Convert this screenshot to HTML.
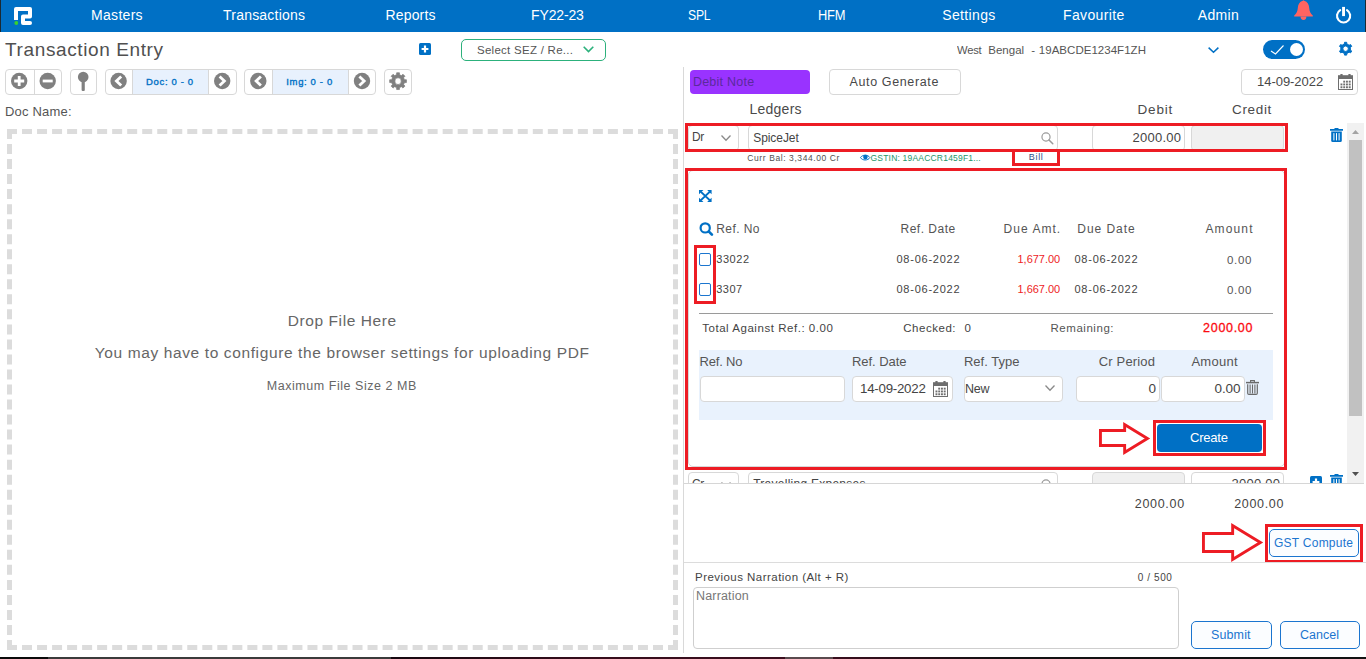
<!DOCTYPE html>
<html lang="en"><head><meta charset="utf-8"><title>Transaction Entry</title>
<style>
*{box-sizing:border-box;margin:0;padding:0}
html,body{width:1366px;height:659px;overflow:hidden;background:#fff}
body{position:relative;font-family:"Liberation Sans",Arial,sans-serif;color:#444}
.t{position:absolute;white-space:nowrap;line-height:20px;height:20px;display:block}
.abs{position:absolute}
nav{position:absolute;left:0;top:0;width:1366px;height:32px;background:#0070c5}
nav .t{color:#fff}
.bx{position:absolute;border:1px solid #d8d8d8;border-radius:4px;background:#fff}
.red{position:absolute;border:3px solid #ed1c24}
.btn{position:absolute;border:1px solid #1b75cf;border-radius:5px;background:#fbfdff}
svg{position:absolute;overflow:visible}
</style></head><body>

<nav>
<div class="abs" style="left:0;top:0;width:1px;height:32px;background:#1a2a33"></div>
<div class="abs" style="left:1365px;top:0;width:1px;height:32px;background:#1a2a33"></div>
<svg style="left:14px;top:7px" width="18" height="18" viewBox="0 0 18 18"><path d="M2 13V2H16V9.5H9V16H16" fill="none" stroke="#fff" stroke-width="4" stroke-linejoin="round" stroke-linecap="butt"/><circle cx="16" cy="16" r="2" fill="#fff"/><circle cx="2.3" cy="16" r="1.9" fill="#3ad12c"/></svg>
<a class="t" style="left:91.1px;top:5.0px;font-size:14px;letter-spacing:0.29px;color:#fff;">Masters</a>
<a class="t" style="left:223.1px;top:5.0px;font-size:14px;letter-spacing:0.20px;color:#fff;">Transactions</a>
<a class="t" style="left:385.5px;top:5.0px;font-size:14px;letter-spacing:0.16px;color:#fff;">Reports</a>
<a class="t" style="left:531.1px;top:5.0px;font-size:14px;letter-spacing:-0.15px;color:#fff;">FY22-23</a>
<a class="t" style="left:687.9px;top:5.0px;font-size:14px;letter-spacing:-0.25px;color:#fff;transform:scaleX(0.8705);transform-origin:0 50%;">SPL</a>
<a class="t" style="left:817.7px;top:5.0px;font-size:14px;letter-spacing:-0.25px;color:#fff;transform:scaleX(0.9188);transform-origin:0 50%;">HFM</a>
<a class="t" style="left:942.2px;top:5.0px;font-size:14px;letter-spacing:0.37px;color:#fff;">Settings</a>
<a class="t" style="left:1063.0px;top:5.0px;font-size:14px;letter-spacing:0.36px;color:#fff;">Favourite</a>
<a class="t" style="left:1197.7px;top:5.0px;font-size:14px;letter-spacing:0.38px;color:#fff;">Admin</a>
<svg style="left:1294px;top:0" width="19" height="21" viewBox="0 0 19 21"><path d="M9.5 -1 C9.5 0.5 9.6 0.6 10.2 0.8 C13.6 1.8 15 4.5 15.2 8 C15.4 11.5 16.5 13.5 18.8 15.6 L18.8 16.6 L0.2 16.6 L0.2 15.6 C2.5 13.5 3.6 11.5 3.8 8 C4 4.5 5.4 1.8 8.8 0.8 C9.4 0.6 9.5 0.5 9.5 -1 Z" fill="#ff6461"/><path d="M6.6 16.5 A2.9 3.4 0 0 0 12.4 16.5 Z" fill="#ff6461"/></svg>
<svg style="left:1335px;top:6px" width="18" height="18" viewBox="0 0 18 18"><path d="M5.2 4.2 A6.6 6.6 0 1 0 12 4.2" fill="none" stroke="#fff" stroke-width="2.1" stroke-linecap="round"/><rect x="7.1" y="0.9" width="2.9" height="9.2" fill="#fff"/></svg>
</nav>
<h1 class="t" style="left:5.1px;top:39.5px;font-size:19px;letter-spacing:0.61px;color:#505050;font-weight:400;">Transaction Entry</h1>
<svg style="left:419px;top:43px" width="12" height="12" viewBox="0 0 12 12"><rect width="12" height="12" rx="1.5" fill="#0070c5"/><path d="M6 2.6V9.4M2.6 6H9.4" stroke="#fff" stroke-width="2.2"/></svg>
<div class="abs" style="left:461px;top:39px;width:145px;height:22px;border:1px solid #2cb17c;border-radius:5px;background:#fff"></div>
<span class="t" style="left:477.0px;top:40.0px;font-size:11.5px;letter-spacing:0.27px;color:#555;">Select SEZ / Re...</span>
<svg style="left:583px;top:46px" width="11" height="7" viewBox="0 0 11 7"><path d="M0.7 0.8L5.5 5.6L10.3 0.8" fill="none" stroke="#2cb17c" stroke-width="1.6"/></svg>
<span class="t" style="left:956.6px;top:40.0px;font-size:11.5px;letter-spacing:-0.25px;color:#555;transform:scaleX(0.9748);transform-origin:0 50%;">West</span>
<span class="t" style="left:988.3px;top:40.0px;font-size:11.5px;letter-spacing:-0.00px;color:#555;">Bengal</span>
<span class="t" style="left:1031.3px;top:40.0px;font-size:11.5px;letter-spacing:0.00px;color:#555;">-</span>
<span class="t" style="left:1038.8px;top:40.0px;font-size:11.5px;letter-spacing:0.03px;color:#555;">19ABCDE1234F1ZH</span>
<svg style="left:1207.5px;top:47px" width="11" height="6" viewBox="0 0 11 6"><path d="M0.6 0.6L5.5 5.2L10.4 0.6" fill="none" stroke="#0070c5" stroke-width="1.5"/></svg>
<div class="abs" style="left:1263px;top:40px;width:42px;height:19px;border-radius:10px;background:#0070c5"></div>
<div class="abs" style="left:1289.5px;top:43px;width:13px;height:13px;border-radius:50%;background:#fff"></div>
<svg style="left:1270px;top:44px" width="15" height="11" viewBox="0 0 15 11"><path d="M1 7L5.5 10L13.5 1.5" fill="none" stroke="#fff" stroke-width="1.1"/></svg>
<svg style="left:0;top:0" width="1" height="1"><path d="M1346.83 53.48 L1346.68 55.11 L1344.52 55.11 L1344.37 53.48 L1342.07 52.16 L1340.59 52.84 L1339.51 50.97 L1340.84 50.03 L1340.84 47.37 L1339.51 46.43 L1340.59 44.56 L1342.07 45.24 L1344.37 43.92 L1344.52 42.29 L1346.68 42.29 L1346.83 43.92 L1349.13 45.24 L1350.61 44.56 L1351.69 46.43 L1350.36 47.37 L1350.36 50.03 L1351.69 50.97 L1350.61 52.84 L1349.13 52.16 Z M1348.33 48.70 A2.73 2.73 0 1 0 1342.87 48.70 A2.73 2.73 0 1 0 1348.33 48.70 Z" fill="#0070c5" fill-rule="evenodd" stroke="#0070c5" stroke-width="1.0" stroke-linejoin="round"/></svg>
<div class="bx" style="left:5px;top:69px;width:57px;height:26px"></div>
<div class="abs" style="left:33.5px;top:69px;width:1px;height:26px;background:#d8d8d8"></div>
<div class="bx" style="left:70px;top:69px;width:27px;height:26px"></div>
<div class="bx" style="left:105px;top:69px;width:132px;height:26px;overflow:hidden"><div class="abs" style="left:26px;top:0;width:77px;height:24px;background:#e8f1fd;border-left:1px solid #d8d8d8;border-right:1px solid #d8d8d8"></div></div>
<div class="bx" style="left:244px;top:69px;width:132px;height:26px;overflow:hidden"><div class="abs" style="left:27px;top:0;width:77px;height:24px;background:#e8f1fd;border-left:1px solid #d8d8d8;border-right:1px solid #d8d8d8"></div></div>
<div class="bx" style="left:384px;top:69px;width:28px;height:26px"></div>
<svg style="left:0;top:0" width="1" height="1">
<circle cx="19.2" cy="81" r="8.2" fill="#808080"/><path d="M19.2 76V86M14.2 81H24.2" stroke="#fff" stroke-width="2.8"/>
<circle cx="47.7" cy="81" r="8.2" fill="#808080"/><path d="M42.7 81H52.7" stroke="#fff" stroke-width="2.8"/>
<circle cx="83.2" cy="77" r="5.3" fill="#808080"/><rect x="81.6" y="80" width="3.2" height="11" rx="1" fill="#808080"/>
<circle cx="118.6" cy="81" r="8.2" fill="#808080"/><path d="M121.19999999999999 76.4L116.39999999999999 81L121.19999999999999 85.6" fill="none" stroke="#fff" stroke-width="2.8"/>
<circle cx="222.2" cy="81" r="8.2" fill="#808080"/><path d="M219.6 76.4L224.39999999999998 81L219.6 85.6" fill="none" stroke="#fff" stroke-width="2.8"/>
<circle cx="258.3" cy="81" r="8.2" fill="#808080"/><path d="M260.90000000000003 76.4L256.1 81L260.90000000000003 85.6" fill="none" stroke="#fff" stroke-width="2.8"/>
<circle cx="362" cy="81" r="8.2" fill="#808080"/><path d="M359.4 76.4L364.2 81L359.4 85.6" fill="none" stroke="#fff" stroke-width="2.8"/>
<path d="M404.43 79.67 L406.43 79.75 L406.43 82.55 L404.43 82.63 L403.60 84.61 L404.97 86.09 L402.99 88.07 L401.51 86.70 L399.53 87.53 L399.45 89.53 L396.65 89.53 L396.57 87.53 L394.59 86.70 L393.11 88.07 L391.13 86.09 L392.50 84.61 L391.67 82.63 L389.67 82.55 L389.67 79.75 L391.67 79.67 L392.50 77.69 L391.13 76.21 L393.11 74.23 L394.59 75.60 L396.57 74.77 L396.65 72.77 L399.45 72.77 L399.53 74.77 L401.51 75.60 L402.99 74.23 L404.97 76.21 L403.60 77.69 Z M401.19 81.15 A3.15 3.15 0 1 0 394.91 81.15 A3.15 3.15 0 1 0 401.19 81.15 Z" fill="#808080" fill-rule="evenodd" stroke="#808080" stroke-width="0.7" stroke-linejoin="round"/>
</svg>
<span class="t" style="left:146.1px;top:71.5px;font-size:9.5px;letter-spacing:0.65px;color:#0070c5;-webkit-text-stroke:0.35px #0070c5;">Doc: 0 - 0</span>
<span class="t" style="left:286.3px;top:71.5px;font-size:9.5px;letter-spacing:0.64px;color:#0070c5;-webkit-text-stroke:0.35px #0070c5;">Img: 0 - 0</span>
<span class="t" style="left:5.0px;top:101.5px;font-size:13px;letter-spacing:0.19px;color:#555;">Doc Name:</span>
<div class="abs" style="left:7px;top:129px;width:671px;height:521px;border:5px dashed #dcdcdc"></div>
<span class="t" style="left:287.7px;top:310.5px;font-size:15.5px;letter-spacing:0.59px;color:#666;">Drop File Here</span>
<span class="t" style="left:94.7px;top:342.5px;font-size:15.5px;letter-spacing:0.62px;color:#666;">You may have to configure the browser settings for uploading PDF</span>
<span class="t" style="left:266.8px;top:376.0px;font-size:12.5px;letter-spacing:0.54px;color:#666;">Maximum File Size 2 MB</span>
<div class="abs" style="left:683px;top:67px;width:1px;height:586px;background:#d9d9d9"></div>
<div class="abs" style="left:0;top:657px;width:1366px;height:2px;background:linear-gradient(90deg,#0a0a0a 0,#0a0a0a 48px,#3b3b3b 48px,#3b3b3b 391px,#160810 391px,#380e1d 600px,#3a0e1e 785px,#5a4a4e 785px,#5a4a4e 833px,#3a0e1e 833px,#121012 1000px,#121212 1366px)"></div>
<div class="abs" style="left:690px;top:70px;width:120px;height:24px;border-radius:4px;background:#9933ff"></div>
<span class="t" style="left:692.9px;top:72.0px;font-size:12.5px;letter-spacing:0.24px;color:#5b2a9c;">Debit Note</span>
<div class="bx" style="left:829px;top:69px;width:132px;height:26px"></div>
<span class="t" style="left:849.5px;top:72.0px;font-size:12.5px;letter-spacing:0.63px;color:#484848;">Auto Generate</span>
<div class="bx" style="left:1241px;top:69px;width:117px;height:26px"></div>
<span class="t" style="left:1257.1px;top:71.5px;font-size:13px;letter-spacing:-0.05px;color:#484848;">14-09-2022</span>
<svg style="left:1338px;top:74px" width="15" height="16" viewBox="0 0 15 16"><rect x="0.5" y="2.5" width="14" height="13" fill="#fff" stroke="#6e6e6e" stroke-width="1"/><rect x="0" y="1.2" width="15" height="3.8" fill="#6e6e6e"/><rect x="2.4" y="0" width="2.2" height="2" fill="#6e6e6e"/><rect x="10.4" y="0" width="2.2" height="2" fill="#6e6e6e"/><rect x="5.25" y="6.7" width="1.9" height="1.9" fill="#6e6e6e"/><rect x="8.00" y="6.7" width="1.9" height="1.9" fill="#6e6e6e"/><rect x="10.75" y="6.7" width="1.9" height="1.9" fill="#6e6e6e"/><rect x="2.50" y="9.5" width="1.9" height="1.9" fill="#6e6e6e"/><rect x="5.25" y="9.5" width="1.9" height="1.9" fill="#6e6e6e"/><rect x="8.00" y="9.5" width="1.9" height="1.9" fill="#6e6e6e"/><rect x="10.75" y="9.5" width="1.9" height="1.9" fill="#6e6e6e"/><rect x="2.50" y="12.3" width="1.9" height="1.9" fill="#6e6e6e"/><rect x="5.25" y="12.3" width="1.9" height="1.9" fill="#6e6e6e"/><rect x="8.00" y="12.3" width="1.9" height="1.9" fill="#6e6e6e"/><rect x="10.75" y="12.3" width="1.9" height="1.9" fill="#6e6e6e"/></svg>
<span class="t" style="left:749.5px;top:99.0px;font-size:14px;letter-spacing:0.24px;color:#4a4a4a;">Ledgers</span>
<span class="t" style="left:1137.5px;top:99.5px;font-size:13.5px;letter-spacing:0.82px;color:#4a4a4a;">Debit</span>
<span class="t" style="left:1232.0px;top:99.5px;font-size:13.5px;letter-spacing:0.66px;color:#4a4a4a;">Credit</span>
<div class="abs" style="left:684px;top:120px;width:680px;height:364px;overflow:hidden;border-bottom:1px solid #d6d6d6">
<div class="abs" style="left:-684px;top:-120px;width:1366px;height:659px">
<div class="abs" style="left:1347px;top:123px;width:17px;height:361px;background:#f1f1f1"></div>
<div class="abs" style="left:1349px;top:140px;width:13px;height:276px;background:#c1c1c1"></div>
<svg style="left:1352px;top:130px" width="7" height="4" viewBox="0 0 7 4"><path d="M0 4L3.5 0L7 4Z" fill="#a3a3a3"/></svg>
<svg style="left:1352px;top:472px" width="7" height="4" viewBox="0 0 7 4"><path d="M0 0L3.5 4L7 0Z" fill="#505050"/></svg>
<div class="bx" style="left:688px;top:125px;width:51px;height:26px"></div>
<span class="t" style="left:692.2px;top:127.0px;font-size:12px;letter-spacing:-0.25px;color:#444;transform:scaleX(0.9910);transform-origin:0 50%;">Dr</span>
<svg style="left:721px;top:135px" width="10" height="6" viewBox="0 0 10 6"><path d="M0.5 0.5L5.0 5.3L9.5 0.5" fill="none" stroke="#8a8a8a" stroke-width="1.3"/></svg>
<div class="bx" style="left:748px;top:125px;width:310px;height:26px"></div>
<span class="t" style="left:753.2px;top:128.0px;font-size:12px;letter-spacing:-0.06px;color:#444;">SpiceJet</span>
<svg style="left:1041px;top:132px" width="12.5" height="12.5" viewBox="0 0 12 12"><circle cx="4.8" cy="4.8" r="3.9" fill="none" stroke="#9a9a9a" stroke-width="1.15"/><path d="M7.7 7.7L11.3 11.3" stroke="#9a9a9a" stroke-width="1.4375" stroke-linecap="round"/></svg>
<div class="bx" style="left:1092px;top:125px;width:93px;height:26px"></div>
<span class="t" style="left:1132.5px;top:127.5px;font-size:13px;letter-spacing:0.25px;color:#444;">2000.00</span>
<div class="bx" style="left:1191px;top:125px;width:93px;height:26px;background:#f0f0f0"></div>
<svg style="left:1330px;top:127.8px" width="13" height="14.2" viewBox="0 0 13 14"><path d="M4.5 0H8.5V1H13V2.6H0V1H4.5Z" fill="#0070c5"/><path d="M1.2 3.3H11.8V12.6Q11.8 14 10.4 14H2.6Q1.2 14 1.2 12.6Z" fill="#0070c5"/><path d="M3.9 5V12.3M6.5 5V12.3M9.1 5V12.3" stroke="#fff" stroke-width="1"/></svg>
<div class="red" style="left:685px;top:123px;width:603px;height:29px"></div>
<span class="t" style="left:747.3px;top:148.0px;font-size:8.5px;letter-spacing:0.59px;color:#505050;">Curr Bal: 3,344.00 Cr</span>
<svg style="left:860px;top:154px" width="10.4" height="7.2" viewBox="0 0 10.4 7.2"><path d="M0.5 3.6C2.4 0.4 8 0.4 9.9 3.6C8 6.8 2.4 6.8 0.5 3.6Z" fill="#fff" stroke="#0070c5" stroke-width="1"/><circle cx="5.4" cy="3.1" r="2.3" fill="#0070c5"/></svg>
<span class="t" style="left:870.5px;top:148.0px;font-size:8.5px;letter-spacing:0.20px;color:#249669;">GSTIN: 19AACCR1459F1...</span>
<span class="t" style="left:1028.8px;top:147.0px;font-size:9px;letter-spacing:0.67px;color:#2f4f88;">Bill</span>
<div class="red" style="left:1012px;top:149px;width:48px;height:17px;border-top:none"></div>
<div class="abs" style="left:688px;top:170px;width:597px;height:297px;border:1px solid #d8d8d8;border-radius:5px"></div>
<svg style="left:699px;top:189.8px" width="12.6" height="12" viewBox="0 0 13 13" preserveAspectRatio="none"><path d="M2 2L11 11M11 2L2 11" stroke="#0070c5" stroke-width="2.1"/><path d="M0 0H4.6L0 4.6Z M13 0H8.4L13 4.6Z M0 13H4.6L0 8.4Z M13 13H8.4L13 8.4Z" fill="#0070c5"/></svg>
<svg style="left:0;top:0" width="1" height="1"><circle cx="705.2" cy="227.9" r="4.6" fill="none" stroke="#0070c5" stroke-width="2.2"/><path d="M708.7 231.4L711.9 234.6" stroke="#0070c5" stroke-width="2.7" stroke-linecap="round"/></svg>
<span class="t" style="left:716.2px;top:219.0px;font-size:12px;letter-spacing:0.44px;color:#555;">Ref. No</span>
<span class="t" style="left:900.5px;top:219.0px;font-size:12px;letter-spacing:0.50px;color:#555;">Ref. Date</span>
<span class="t" style="left:1003.5px;top:219.0px;font-size:12px;letter-spacing:1.05px;color:#555;">Due Amt.</span>
<span class="t" style="left:1077.3px;top:219.0px;font-size:12px;letter-spacing:0.96px;color:#555;">Due Date</span>
<span class="t" style="left:1205.4px;top:219.0px;font-size:12px;letter-spacing:1.15px;color:#555;">Amount</span>
<div class="abs" style="left:699px;top:253.4px;width:12px;height:12.6px;border:1px solid #1b75cf;border-radius:2px;background:#fff"></div>
<span class="t" style="left:716.2px;top:249.0px;font-size:11px;letter-spacing:0.60px;color:#444;">33022</span>
<span class="t" style="left:896.5px;top:249.0px;font-size:11px;letter-spacing:0.75px;color:#444;">08-06-2022</span>
<span class="t" style="left:1017.5px;top:249.0px;font-size:11px;letter-spacing:-0.02px;color:#ee1c25;">1,677.00</span>
<span class="t" style="left:1074.5px;top:249.0px;font-size:11px;letter-spacing:0.75px;color:#444;">08-06-2022</span>
<span class="t" style="left:1227.0px;top:250.0px;font-size:11.5px;letter-spacing:0.71px;color:#555;">0.00</span>
<div class="abs" style="left:699px;top:283.4px;width:12px;height:12.6px;border:1px solid #1b75cf;border-radius:2px;background:#fff"></div>
<span class="t" style="left:716.2px;top:279.0px;font-size:11px;letter-spacing:0.51px;color:#444;">3307</span>
<span class="t" style="left:896.5px;top:279.0px;font-size:11px;letter-spacing:0.75px;color:#444;">08-06-2022</span>
<span class="t" style="left:1017.5px;top:279.0px;font-size:11px;letter-spacing:-0.02px;color:#ee1c25;">1,667.00</span>
<span class="t" style="left:1074.5px;top:279.0px;font-size:11px;letter-spacing:0.75px;color:#444;">08-06-2022</span>
<span class="t" style="left:1227.0px;top:280.0px;font-size:11.5px;letter-spacing:0.71px;color:#555;">0.00</span>
<div class="red" style="left:694px;top:245px;width:22px;height:59px"></div>
<div class="abs" style="left:699px;top:313px;width:574px;height:1px;background:#9a9a9a"></div>
<span class="t" style="left:702.2px;top:318.0px;font-size:11.5px;letter-spacing:0.54px;color:#444;">Total Against Ref.: 0.00</span>
<span class="t" style="left:903.3px;top:318.0px;font-size:11.5px;letter-spacing:0.52px;color:#444;">Checked:</span>
<span class="t" style="left:964.5px;top:318.0px;font-size:11.5px;letter-spacing:0.00px;color:#444;">0</span>
<span class="t" style="left:1050.5px;top:318.0px;font-size:11.5px;letter-spacing:0.54px;color:#555;">Remaining:</span>
<span class="t" style="left:1203.1px;top:318.0px;font-size:12.5px;letter-spacing:0.70px;color:#fb0a10;-webkit-text-stroke:0.3px #fb0a10;">2000.00</span>
<div class="abs" style="left:699px;top:350px;width:574px;height:70px;background:#e9f2fd"></div>
<span class="t" style="left:699.5px;top:351.5px;font-size:13px;letter-spacing:-0.18px;color:#555;">Ref. No</span>
<span class="t" style="left:851.9px;top:351.5px;font-size:13px;letter-spacing:-0.04px;color:#555;">Ref. Date</span>
<span class="t" style="left:963.9px;top:351.5px;font-size:13px;letter-spacing:0.03px;color:#555;">Ref. Type</span>
<span class="t" style="left:1098.8px;top:351.5px;font-size:13px;letter-spacing:0.15px;color:#555;">Cr Period</span>
<span class="t" style="left:1191.4px;top:351.5px;font-size:13px;letter-spacing:0.26px;color:#555;">Amount</span>
<div class="bx" style="left:700px;top:376px;width:145px;height:26px"></div>
<div class="bx" style="left:852px;top:376px;width:101px;height:26px"></div>
<span class="t" style="left:860.1px;top:378.5px;font-size:13.5px;letter-spacing:-0.25px;color:#444;transform:scaleX(0.9851);transform-origin:0 50%;">14-09-2022</span>
<svg style="left:933px;top:381px" width="15" height="16" viewBox="0 0 15 16"><rect x="0.5" y="2.5" width="14" height="13" fill="#fff" stroke="#6e6e6e" stroke-width="1"/><rect x="0" y="1.2" width="15" height="3.8" fill="#6e6e6e"/><rect x="2.4" y="0" width="2.2" height="2" fill="#6e6e6e"/><rect x="10.4" y="0" width="2.2" height="2" fill="#6e6e6e"/><rect x="5.25" y="6.7" width="1.9" height="1.9" fill="#6e6e6e"/><rect x="8.00" y="6.7" width="1.9" height="1.9" fill="#6e6e6e"/><rect x="10.75" y="6.7" width="1.9" height="1.9" fill="#6e6e6e"/><rect x="2.50" y="9.5" width="1.9" height="1.9" fill="#6e6e6e"/><rect x="5.25" y="9.5" width="1.9" height="1.9" fill="#6e6e6e"/><rect x="8.00" y="9.5" width="1.9" height="1.9" fill="#6e6e6e"/><rect x="10.75" y="9.5" width="1.9" height="1.9" fill="#6e6e6e"/><rect x="2.50" y="12.3" width="1.9" height="1.9" fill="#6e6e6e"/><rect x="5.25" y="12.3" width="1.9" height="1.9" fill="#6e6e6e"/><rect x="8.00" y="12.3" width="1.9" height="1.9" fill="#6e6e6e"/><rect x="10.75" y="12.3" width="1.9" height="1.9" fill="#6e6e6e"/></svg>
<div class="bx" style="left:964px;top:376px;width:99px;height:26px"></div>
<span class="t" style="left:965.0px;top:378.5px;font-size:13px;letter-spacing:-0.25px;color:#444;transform:scaleX(0.9606);transform-origin:0 50%;">New</span>
<svg style="left:1045px;top:385px" width="10" height="6" viewBox="0 0 10 6"><path d="M0.5 0.5L5.0 5.3L9.5 0.5" fill="none" stroke="#8a8a8a" stroke-width="1.3"/></svg>
<div class="bx" style="left:1076px;top:376px;width:84px;height:26px"></div>
<span class="t" style="left:1148.5px;top:378.5px;font-size:13.5px;letter-spacing:0.00px;color:#444;">0</span>
<div class="bx" style="left:1161px;top:376px;width:84px;height:26px"></div>
<span class="t" style="left:1214.5px;top:378.5px;font-size:13.5px;letter-spacing:-0.09px;color:#444;">0.00</span>
<svg style="left:1246px;top:380.2px" width="13" height="15" viewBox="0 0 13 15"><path d="M4.6 2V0.6H8.4V2" fill="none" stroke="#6a6a6a" stroke-width="1.1"/><path d="M0 2.6H13" stroke="#6a6a6a" stroke-width="1.5"/><path d="M1.7 4.2V13.2Q1.7 14.4 2.9 14.4H10.1Q11.3 14.4 11.3 13.2V4.2" fill="none" stroke="#6a6a6a" stroke-width="1.2"/><path d="M4.1 4.4V13.6M6.5 4.4V13.6M8.9 4.4V13.6" stroke="#6a6a6a" stroke-width="1.1"/></svg>
<svg style="left:0;top:0" width="1" height="1"><clipPath id="ar1"><polygon points="1099,429 1123.2,429 1123.2,422 1150.2,438.5 1123.2,455 1123.2,447 1099,447"/></clipPath><polygon points="1099,429 1123.2,429 1123.2,422 1150.2,438.5 1123.2,455 1123.2,447 1099,447" fill="#fff" stroke="#ed1c24" stroke-width="5.8" stroke-linejoin="miter" stroke-miterlimit="10" clip-path="url(#ar1)"/></svg>
<button class="abs" style="left:1157px;top:424px;width:105px;height:28px;border:0;border-radius:4px;background:#0070c5"></button>
<span class="t" style="left:1190.0px;top:427.5px;font-size:13.5px;letter-spacing:-0.25px;color:#fff;transform:scaleX(0.9677);transform-origin:0 50%;">Create</span>
<div class="red" style="left:1153px;top:420px;width:113px;height:36px"></div>
<div class="red" style="left:685px;top:168px;width:602.4px;height:301.5px"></div>
<div class="bx" style="left:688px;top:472px;width:51px;height:26px"></div>
<span class="t" style="left:692.2px;top:474.0px;font-size:12px;letter-spacing:-0.25px;color:#444;transform:scaleX(0.9910);transform-origin:0 50%;">Cr</span>
<svg style="left:721px;top:481.5px" width="10" height="6" viewBox="0 0 10 6"><path d="M0.5 0.5L5.0 5.3L9.5 0.5" fill="none" stroke="#8a8a8a" stroke-width="1.3"/></svg>
<div class="bx" style="left:748px;top:472px;width:310px;height:26px"></div>
<span class="t" style="left:753.2px;top:474.0px;font-size:12px;letter-spacing:0.26px;color:#444;">Travelling Expenses</span>
<svg style="left:1041px;top:479px" width="12.5" height="12.5" viewBox="0 0 12 12"><circle cx="4.8" cy="4.8" r="3.9" fill="none" stroke="#9a9a9a" stroke-width="1.15"/><path d="M7.7 7.7L11.3 11.3" stroke="#9a9a9a" stroke-width="1.4375" stroke-linecap="round"/></svg>
<div class="bx" style="left:1092px;top:472px;width:93px;height:26px;background:#f0f0f0"></div>
<div class="bx" style="left:1191px;top:472px;width:93px;height:26px"></div>
<span class="t" style="left:1231.5px;top:473.5px;font-size:13px;letter-spacing:0.25px;color:#444;">2000.00</span>
<svg style="left:1310px;top:475.5px" width="12" height="12" viewBox="0 0 12 12"><rect width="12" height="12" rx="1.5" fill="#0070c5"/><path d="M6 2.6V9.4M2.6 6H9.4" stroke="#fff" stroke-width="2.2"/></svg>
<svg style="left:1330px;top:474px" width="13" height="14.2" viewBox="0 0 13 14"><path d="M4.5 0H8.5V1H13V2.6H0V1H4.5Z" fill="#0070c5"/><path d="M1.2 3.3H11.8V12.6Q11.8 14 10.4 14H2.6Q1.2 14 1.2 12.6Z" fill="#0070c5"/><path d="M3.9 5V12.3M6.5 5V12.3M9.1 5V12.3" stroke="#fff" stroke-width="1"/></svg>
</div></div>
<span class="t" style="left:1134.8px;top:494.0px;font-size:12.5px;letter-spacing:0.69px;color:#444;">2000.00</span>
<span class="t" style="left:1234.2px;top:494.0px;font-size:12.5px;letter-spacing:0.67px;color:#444;">2000.00</span>
<svg style="left:0;top:0" width="1" height="1"><clipPath id="ar2"><polygon points="1202,532 1231.2,532 1231.2,523 1263.2,542.5 1231.2,562 1231.2,553 1202,553"/></clipPath><polygon points="1202,532 1231.2,532 1231.2,523 1263.2,542.5 1231.2,562 1231.2,553 1202,553" fill="#fff" stroke="#ed1c24" stroke-width="5.8" stroke-linejoin="miter" stroke-miterlimit="10" clip-path="url(#ar2)"/></svg>
<div class="btn" style="left:1269px;top:529px;width:90px;height:28px"></div>
<span class="t" style="left:1274.0px;top:533.0px;font-size:12px;letter-spacing:0.25px;color:#1b75cf;">GST Compute</span>
<div class="red" style="left:1265px;top:524px;width:98px;height:38.5px"></div>
<div class="abs" style="left:684px;top:562px;width:682px;height:1px;background:#dcdcdc"></div>
<span class="t" style="left:695.0px;top:567.0px;font-size:11.5px;letter-spacing:0.46px;color:#444;">Previous Narration (Alt + R)</span>
<span class="t" style="left:1137.8px;top:567.5px;font-size:10px;letter-spacing:0.59px;color:#444;">0 / 500</span>
<div class="bx" style="left:693px;top:587px;width:486px;height:62px;border-color:#cfcfcf"></div>
<span class="t" style="left:696.1px;top:586.0px;font-size:12.5px;letter-spacing:0.15px;color:#777;">Narration</span>
<div class="btn" style="left:1191px;top:621px;width:81px;height:27.5px"></div>
<span class="t" style="left:1211.0px;top:625.0px;font-size:12.5px;letter-spacing:0.12px;color:#1b75cf;">Submit</span>
<div class="btn" style="left:1280px;top:621px;width:80px;height:27.5px"></div>
<span class="t" style="left:1300.0px;top:625.0px;font-size:12.5px;letter-spacing:0.02px;color:#1b75cf;">Cancel</span>
</body></html>
